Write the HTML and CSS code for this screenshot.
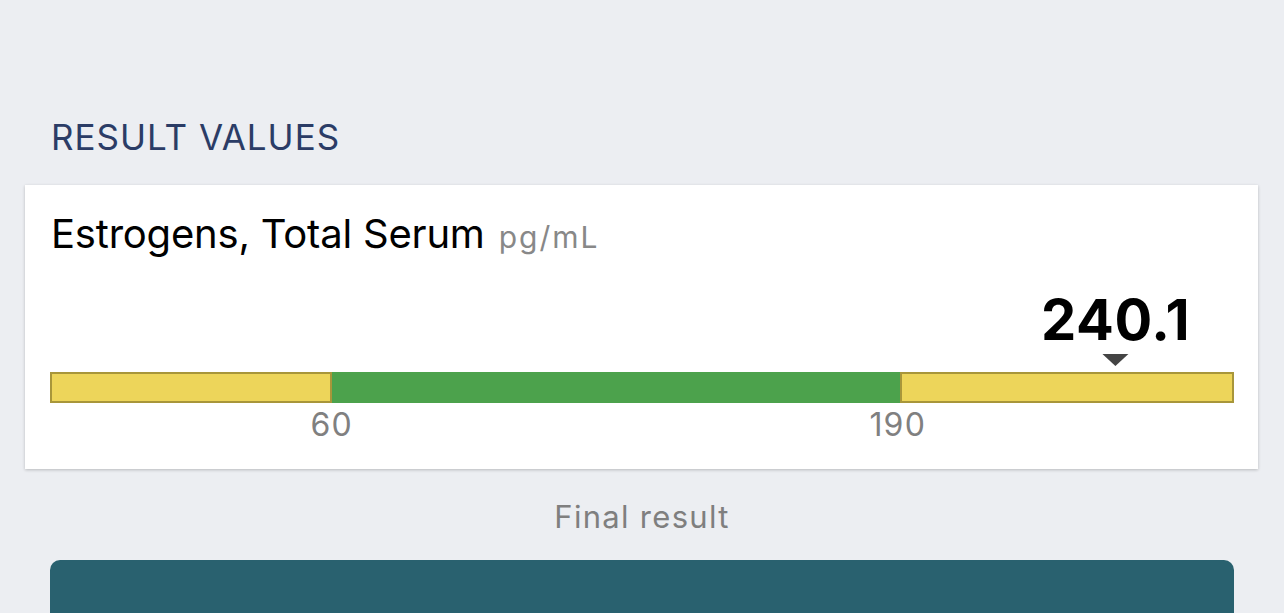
FILE: index.html
```html
<!DOCTYPE html>
<html lang="en">
<head>
<meta charset="utf-8">
<title>Result values</title>
<link rel="stylesheet" href="styles.css">
</head>
<body>
<main class="page">
  <h2 class="section-title">RESULT VALUES</h2>
  <section class="card">
    <div class="test-name">Estrogens, Total Serum <span class="unit">pg/mL</span></div>
    <div class="range">
      <div class="marker-track">
        <div class="marker" style="left: 90%;">
          <span class="value">240.1</span>
          <span class="pointer"></span>
        </div>
      </div>
      <div class="bar">
        <div class="seg seg-low" style="width: 23.85%;"></div>
        <div class="seg seg-normal" style="width: 47.9%;"></div>
        <div class="seg seg-high" style="width: 28.25%;"></div>
      </div>
      <div class="ticks">
        <span class="tick" style="left: 23.8%;">60</span>
        <span class="tick" style="left: 71.6%;">190</span>
      </div>
    </div>
  </section>
  <p class="status">Final result</p>
  <div class="action"></div>
</main>
</body>
</html>
```

FILE: styles.css
```css
* { box-sizing: border-box; }
html, body {
  margin: 0;
  padding: 0;
  height: 100%;
  overflow: hidden;
  background: #eceef2;
}
body {
  font-family: Inter, "Liberation Sans", Arial, sans-serif;
  color: #000;
}
.page {
  padding: 117px 50px 0 50px;
}
.section-title {
  margin: 0 0 0 1px;
  font-size: 35px;
  line-height: 40px;
  font-weight: 400;
  color: #2b3c66;
  letter-spacing: 1px;
}
.card {
  margin: 28px -24px 0 -25px;
  background: #fff;
  box-shadow: 0 1px 3px rgba(0, 0, 0, 0.22);
  padding: 25px 24px 26px 25px;
}
.test-name {
  font-size: 40px;
  line-height: 48px;
  color: #000;
  padding-left: 1px;
  letter-spacing: -0.2px;
}
.unit {
  font-size: 30px;
  color: #888;
  margin-left: 3px;
  letter-spacing: 2px;
}
.range {
  margin-top: 31px;
}
.marker-track {
  position: relative;
  height: 80px;
}
.marker {
  position: absolute;
  bottom: 6px;
  transform: translateX(-50%);
  display: flex;
  flex-direction: column;
  align-items: center;
}
.value {
  font-size: 56px;
  line-height: 60px;
  font-weight: 700;
  letter-spacing: 0.6px;
}
.pointer {
  margin-top: 4px;
  width: 0;
  height: 0;
  border-left: 13px solid transparent;
  border-right: 13px solid transparent;
  border-top: 12px solid #444;
}
.bar {
  display: flex;
  height: 31px;
}
.seg { height: 100%; }
.seg-low, .seg-high {
  background: #edd55a;
  border: 2.5px solid #a8963a;
}
.seg-normal {
  background: #4ca24c;
}
.ticks {
  position: relative;
  height: 40px;
}
.tick {
  position: absolute;
  top: 3px;
  transform: translateX(-50%);
  font-size: 32px;
  line-height: 38px;
  color: #808080;
  letter-spacing: 1.2px;
}
.status {
  margin: 30px 0 0 0;
  text-align: center;
  font-size: 31px;
  line-height: 36px;
  color: #7f7f7f;
  letter-spacing: 1.3px;
}
.action {
  margin-top: 25px;
  height: 80px;
  background: #29616f;
  border-radius: 10px;
}
```
